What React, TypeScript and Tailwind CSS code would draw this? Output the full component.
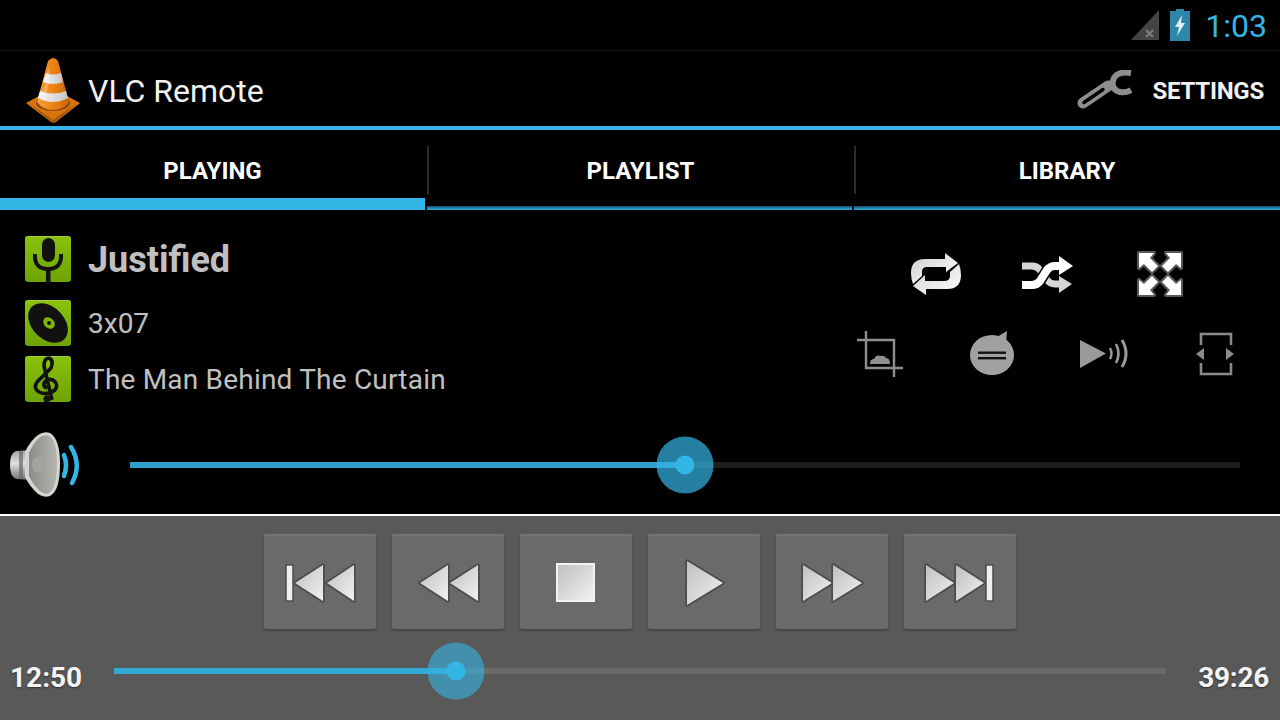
import React from "react";

const Tile = ({ children }: { children: React.ReactNode }) => (
  <div className="w-[46px] h-[46px] shrink-0 rounded-[3px] bg-gradient-to-b from-[#8ac20e] to-[#6ea303] overflow-hidden shadow-[inset_0_1px_0_rgba(255,255,255,0.2)]">
    <svg viewBox="0 0 46 46" className="w-full h-full blur-[0.4px]">{children}</svg>
  </div>
);

const Cone = () => (
  <svg viewBox="0 0 56 66" className="w-[56px] h-[66px] blur-[0.4px]">
    <defs>
      <linearGradient id="cone" x1="0" x2="1" y1="0" y2="0">
        <stop offset="0" stopColor="#f9a13a" />
        <stop offset="0.5" stopColor="#ee8215" />
        <stop offset="1" stopColor="#c9660a" />
      </linearGradient>
      <linearGradient id="stripe" x1="0" x2="1" y1="0" y2="0">
        <stop offset="0" stopColor="#f7f7f7" />
        <stop offset="1" stopColor="#c4c4c4" />
      </linearGradient>
    </defs>
    <path d="M1 45 L14 38 L42 38 L55 45 L31 64 Q29 65 26 64 Z" fill="#d9750f" />
    <path d="M4 45 L28 62 L52 45 L31 64 Q29 65 26 64 Z" fill="#a85508" />
    <ellipse cx="28" cy="45" rx="17" ry="8" fill="#8f4a08" />
    <path d="M23 3 Q26 0 28 0 Q31 0 33 3 L44 44 Q38 52 28 52 Q18 52 12 44 Z" fill="url(#cone)" />
    <path d="M21 15 Q28 18 36 15 L38 24 Q28 28 18 24 Z" fill="url(#stripe)" />
    <path d="M15 33 Q28 38 41 33 L43 40 Q28 48 13 40 Z" fill="url(#stripe)" />
    <path d="M24 8 L21 24 L16 40 L20 42 L24 24 Z" fill="#fff" opacity="0.25" />
  </svg>
);

const Wrench = () => (
  <svg viewBox="0 0 56 42" className="w-[56px] h-[42px] blur-[0.4px]" fill="none" strokeLinecap="round">
    <path d="M7 33 L32 16" stroke="#8e8e8e" strokeWidth="11" />
    <path d="M8 32.5 L27 19.5" stroke="#000" strokeWidth="3.5" />
    <path d="M55 3 Q42 1 38 8 Q34 17 41 21 Q48 24 55 20" stroke="#8e8e8e" strokeWidth="6" strokeLinecap="butt" />
  </svg>
);

const Repeat = () => (
  <svg viewBox="0 0 50 46" className="w-[50px] h-[46px] blur-[0.5px]">
    <defs>
      <linearGradient id="sil" x1="0" x2="1" y1="0" y2="1">
        <stop offset="0" stopColor="#cfcfcf" />
        <stop offset="1" stopColor="#ffffff" />
      </linearGradient>
    </defs>
    <path d="M34 2 L47 12 L35 21 L35 16 L16 16 Q11 16 11 21 L11 25 L2 33 Q0 28 0 22 Q0 8 14 8 L34 8 Z" fill="url(#sil)" />
    <path d="M15 44 L2 35 L14 24 L14 30 L33 30 Q39 30 39 25 L39 21 L48 13 Q50 18 50 24 Q50 38 36 38 L15 38 Z" fill="url(#sil)" />
  </svg>
);

const Shuffle = () => (
  <svg viewBox="0 0 52 40" className="w-[52px] h-[40px] blur-[0.5px]" fill="none">
    <path d="M0 12 L10 12 Q15 12 18 16 L25 26 Q28 30 33 30 L39 30" stroke="#d6d6d6" strokeWidth="7" />
    <path d="M37 22 L50 30 L37 39 Z" fill="#d6d6d6" />
    <path d="M0 31 L10 31 Q15 31 18 27 L25 16 Q28 12 33 12 L39 12" stroke="#000" strokeWidth="11" />
    <path d="M0 31 L10 31 Q15 31 18 27 L25 16 Q28 12 33 12 L39 12" stroke="#fff" strokeWidth="8" />
    <path d="M37 2 L51 12 L37 21 Z" fill="#fff" />
  </svg>
);

const Expand = () => (
  <svg viewBox="0 0 48 48" className="w-[48px] h-[48px] blur-[0.4px]">
    <g stroke="#5a5a5a" strokeWidth="4" fill="#fff" strokeLinejoin="round" paintOrder="stroke">
      <path d="M3 3 L18 3 L14 8 L22 16 L16 22 L8 14 L3 18 Z" />
      <path d="M45 3 L30 3 L34 8 L26 16 L32 22 L40 14 L45 18 Z" />
      <path d="M3 45 L18 45 L14 40 L22 32 L16 26 L8 34 L3 30 Z" />
      <path d="M45 45 L30 45 L34 40 L26 32 L32 26 L40 34 L45 30 Z" />
    </g>
  </svg>
);

const CropIcon = () => (
  <svg viewBox="0 0 46 46" className="w-[46px] h-[46px] blur-[0.4px]" fill="none" stroke="#8f8f8f" strokeWidth="2.4">
    <path d="M0 9 L37 9 L37 46" />
    <path d="M9 0 L9 37 L46 37" />
    <path d="M13 33 Q13 28 17 28 Q19 23 24 25 Q27 24 29 27 Q33 27 33 33 Z" fill="#8f8f8f" stroke="none" />
  </svg>
);

const Chat = () => (
  <svg viewBox="0 0 46 46" className="w-[46px] h-[46px] blur-[0.4px]">
    <ellipse cx="23" cy="24" rx="22" ry="20" fill="#a0a0a0" />
    <path d="M28 6 L38 0 L37 12 Z" fill="#a0a0a0" />
    <rect x="9" y="20.5" width="28" height="2.4" fill="#111" />
    <rect x="9" y="26" width="28" height="2.4" fill="#111" />
  </svg>
);

const PlaySound = () => (
  <svg viewBox="0 0 50 32" className="w-[50px] h-[32px] blur-[0.4px]">
    <path d="M1 2 L27 15.5 L1 30 Z" fill="#9a9a9a" />
    <g fill="none" stroke="#9a9a9a">
      <path d="M31 10 Q34 15.5 31 21" strokeWidth="2.4" />
      <path d="M37 6 Q42 15.5 37 25" strokeWidth="2.6" />
      <path d="M43 2 Q51 15.5 43 29" strokeWidth="3" />
    </g>
  </svg>
);

const Aspect = () => (
  <svg viewBox="0 0 40 44" className="w-[40px] h-[44px] blur-[0.4px]">
    <g fill="none" stroke="#8a8a8a" strokeWidth="2.6">
      <path d="M5 13 L5 2 L35 2 L35 13" />
      <path d="M5 31 L5 42 L35 42 L35 31" />
    </g>
    <path d="M0 22 L8 16 L8 28 Z" fill="#8a8a8a" />
    <path d="M38 22 L30 16 L30 28 Z" fill="#8a8a8a" />
  </svg>
);

const Speaker = () => (
  <svg viewBox="0 0 72 68" className="w-[72px] h-[68px] blur-[0.4px]">
    <defs>
      <linearGradient id="spk" x1="0" x2="1" y1="0" y2="0">
        <stop offset="0" stopColor="#8b8b87" />
        <stop offset="1" stopColor="#b5b5b0" />
      </linearGradient>
      <linearGradient id="back" x1="0" x2="0" y1="0" y2="1">
        <stop offset="0" stopColor="#a0a0a0" />
        <stop offset="0.45" stopColor="#e0e0e0" />
        <stop offset="1" stopColor="#707070" />
      </linearGradient>
    </defs>
    <path d="M6 20 Q0 22 0 34 Q0 46 6 48 L24 49 L24 19 Z" fill="url(#back)" />
    <path d="M9 20 L13 20 L13 48 L9 48 Z" fill="#666" opacity="0.7" />
    <path d="M15 21 Q20 10 28 4 Q34 0 40 2 Q50 8 50 33 Q50 60 40 65 Q34 67 28 63 Q20 56 15 46 Z" fill="#d4d4d0" />
    <path d="M19 22 Q24 11 30 6 Q35 3 39 5 Q47 10 47 33 Q47 57 39 62 Q35 64 30 60 Q24 55 19 45 Z" fill="url(#spk)" />
    <ellipse cx="28" cy="34" rx="6" ry="8" fill="#a3a39f" />
    <g fill="none" stroke="#33b5e5" strokeLinecap="round">
      <path d="M54 24 Q58 34 54 45" strokeWidth="4.5" />
      <path d="M61 16 Q72 34 62 52" strokeWidth="4.5" />
    </g>
  </svg>
);

const Slider = ({
  trackW,
  pct,
  trackColor,
  haloColor,
  lineColor,
}: {
  trackW: string;
  pct: number;
  trackColor: string;
  haloColor: string;
  lineColor: string;
}) => (
  <div className={`relative h-[6px] ${trackW} ${trackColor}`}>
    <div className={`h-full ${lineColor}`} style={{ width: `${pct}%` }} />
    <div
      className={`absolute top-1/2 -translate-x-1/2 -translate-y-1/2 w-[57px] h-[57px] rounded-full ${haloColor} flex items-center justify-center`}
      style={{ left: `${pct}%` }}
    >
      <div className="w-[19px] h-[19px] rounded-full bg-[#33b5e5]" />
    </div>
  </div>
);

const triGrad = "url(#tg)";
const Tri = ({ d }: { d: string }) => (
  <path d={d} fill={triGrad} stroke="#4c4c4c" strokeWidth="3.5" strokeLinejoin="round" paintOrder="stroke" />
);
const Bar = ({ x }: { x: number }) => (
  <rect x={x} y="6" width="7" height="36" fill="#f0f0f0" stroke="#4c4c4c" strokeWidth="1.5" />
);

const Btn = ({ children }: { children: React.ReactNode }) => (
  <button className="w-[112px] h-[95px] bg-[#6a696b] border-t-2 border-t-[#767577] rounded-[2px] shadow-[0_2px_2px_rgba(0,0,0,0.25)] flex items-center justify-center">
    <svg viewBox="0 0 80 48" className="w-[80px] h-[48px] blur-[0.4px]">
      <defs>
        <linearGradient id="tg" x1="0" x2="1" y1="0" y2="1">
          <stop offset="0" stopColor="#bfbfbf" />
          <stop offset="1" stopColor="#f2f2f2" />
        </linearGradient>
      </defs>
      {children}
    </svg>
  </button>
);

const Tab = ({ label, active, sep, width }: { label: string; active?: boolean; sep?: boolean; width: string }) => (
  <div className={`${width} h-full flex flex-col`}>
    <div className="h-[68px] flex items-center relative pt-[14px]">
      <div className={`flex-1 text-center text-[24px] font-bold text-white ${active ? "pr-[2px]" : ""}`}>{label}</div>
      {sep && <div className="absolute -right-[2px] top-[16px] w-[2px] h-[48px] bg-[#2b2b2b]" />}
    </div>
    {active ? (
      <div className="h-[12px] bg-[#33b5e5] mr-[2px]" />
    ) : (
      <div className={`h-[4px] mt-[8px] bg-gradient-to-b from-[#15506a] to-[#33b5e5] ${sep ? "mr-[2px]" : ""}`} />
    )}
  </div>
);

export default function App() {
  return (
    <div className="w-[1280px] h-[720px] bg-black flex flex-col overflow-hidden font-['Roboto',sans-serif]">
      {/* status bar */}
      <div className="h-[51px] border-b border-[#141414] flex items-center justify-end gap-[11px] pr-[13px]">
        <svg viewBox="0 0 28 30" className="w-[28px] h-[30px] blur-[0.4px]">
          <path d="M0 30 L28 0 L28 30 Z" fill="#444" />
          <path d="M15 20 L22 27 M22 20 L15 27" stroke="#808080" strokeWidth="2" />
        </svg>
        <svg viewBox="0 0 20 32" className="w-[20px] h-[32px] blur-[0.4px]">
          <path d="M6 0 L14 0 L14 2 L20 2 L20 32 L0 32 L0 2 L6 2 Z" fill="#2e86a8" />
          <path d="M12 6 L5 18 L9 18 L7 27 L15 14 L11 14 Z" fill="#dceff7" />
        </svg>
        <span className="ml-[4px] pt-[2px] text-[32px] font-normal leading-none text-[#33b5e5]">1:03</span>
      </div>

      {/* action bar */}
      <div className="h-[75px] flex items-center pl-[25px] pr-[16px] pt-[4px]">
        <Cone />
        <span className="ml-[7px] text-[32px] text-[#f2f2f2] leading-none">VLC Remote</span>
        <div className="ml-auto flex items-center gap-[20px]">
          <Wrench />
          <span className="text-[24px] font-bold text-[#f2f2f2] tracking-[-0.25px]">SETTINGS</span>
        </div>
      </div>
      <div className="h-[4px] bg-[#33b5e5]" />

      {/* tabs */}
      <div className="h-[80px] flex">
        <Tab label="PLAYING" active sep width="w-[427px]" />
        <Tab label="PLAYLIST" sep width="w-[427px]" />
        <Tab label="LIBRARY" width="flex-1" />
      </div>

      {/* body */}
      <div className="h-[304px] flex flex-col">
        <div className="flex-1 flex pl-[25px] pr-[8px]">
          <div className="flex-1 flex flex-col pt-[26px]">
            <div className="flex items-center gap-[17px]">
              <Tile>
                <rect x="17" y="2" width="13" height="24" rx="6.5" fill="#111" />
                <path d="M10 18 Q9 33 23 33 Q37 33 36 18" fill="none" stroke="#111" strokeWidth="4" />
                <rect x="21" y="33" width="4.5" height="13" fill="#111" />
              </Tile>
              <span className="pt-[2px] text-[36px] font-bold text-[#c0c0c0] leading-none">Justified</span>
            </div>
            <div className="flex items-center gap-[17px] mt-[18px]">
              <Tile>
                <ellipse cx="23" cy="23" rx="16" ry="23" transform="rotate(-45 23 23)" fill="#111" />
                <ellipse cx="24" cy="23" rx="5" ry="6.5" transform="rotate(-45 24 23)" fill="#7fb50a" />
                <circle cx="24" cy="23" r="2" fill="#111" />
              </Tile>
              <span className="pt-[2px] text-[28px] text-[#c0c0c0] leading-none">3x07</span>
            </div>
            <div className="flex items-center gap-[17px] mt-[10px]">
              <Tile>
                <path
                  d="M27 44 L19 10 Q19 2 24 2 Q29 4 26 12 L12 26 Q8 32 14 36 Q22 40 30 34 Q34 28 28 24 Q22 22 19 27 Q18 31 22 32"
                  fill="none"
                  stroke="#111"
                  strokeWidth="3.6"
                />
                <circle cx="22" cy="43" r="3.5" fill="#111" />
              </Tile>
              <span className="pt-[2px] text-[28px] text-[#c0c0c0] leading-none tracking-[0.2px]">The Man Behind The Curtain</span>
            </div>
          </div>
          <div className="w-[448px] flex flex-col items-center pt-[40px]">
            <div className="flex h-[48px]">
              <div className="w-[112px] flex items-center justify-center"><Repeat /></div>
              <div className="w-[112px] flex items-center justify-center"><Shuffle /></div>
              <div className="w-[112px] flex items-center justify-center"><Expand /></div>
            </div>
            <div className="flex h-[48px] mt-[32px]">
              <div className="w-[112px] flex items-center justify-center"><CropIcon /></div>
              <div className="w-[112px] flex items-center justify-center"><Chat /></div>
              <div className="w-[112px] flex items-center justify-center"><PlaySound /></div>
              <div className="w-[112px] flex items-center justify-center"><Aspect /></div>
            </div>
          </div>
        </div>
        <div className="h-[92px] flex items-start pl-[10px] pt-[9px]">
          <Speaker />
          <div className="mt-[31px] ml-[48px]">
            <Slider trackW="w-[1110px]" pct={50} trackColor="bg-[#1e1e1e]" haloColor="bg-[#33b5e5]/70" lineColor="bg-[#2d9fca]" />
          </div>
        </div>
      </div>

      <div className="h-[2px] bg-white" />

      {/* bottom panel */}
      <div className="flex-1 bg-[#595959] flex flex-col">
        <div className="flex justify-center gap-[16px] pt-[18px]">
          <Btn>
            <Bar x={6} />
            <Tri d="M15 24 L43 6 L43 42 Z" />
            <Tri d="M47 24 L74 6 L74 42 Z" />
          </Btn>
          <Btn>
            <Tri d="M12 24 L40 6 L40 42 Z" />
            <Tri d="M42 24 L70 6 L70 42 Z" />
          </Btn>
          <Btn>
            <rect x="21" y="5" width="37" height="37" fill={triGrad} stroke="#f2f2f2" strokeWidth="2" />
          </Btn>
          <Btn>
            <Tri d="M23 2 L59 24 L23 46 Z" />
          </Btn>
          <Btn>
            <Tri d="M11 6 L40 24 L11 42 Z" />
            <Tri d="M41 6 L70 24 L41 42 Z" />
          </Btn>
          <Btn>
            <Tri d="M6 6 L34 24 L6 42 Z" />
            <Tri d="M36 6 L64 24 L36 42 Z" />
            <Bar x={66} />
          </Btn>
        </div>
        <div className="flex-1 flex items-start pt-[27px]">
          <span className="ml-[10px] mt-[8px] w-[104px] text-[28px] font-bold leading-none text-[#f4f4f4] [text-shadow:0_1px_2px_rgba(0,0,0,0.5)]">12:50</span>
          <div className="mt-[12px]">
            <Slider trackW="w-[1052px]" pct={32.5} trackColor="bg-[#6a6a6a]" haloColor="bg-[#33b5e5]/60" lineColor="bg-[#33a9d6]" />
          </div>
          <span className="ml-auto mt-[8px] mr-[11px] text-[28px] font-bold leading-none tracking-[-0.3px] text-[#f4f4f4] [text-shadow:0_1px_2px_rgba(0,0,0,0.5)]">39:26</span>
        </div>
      </div>
    </div>
  );
}
